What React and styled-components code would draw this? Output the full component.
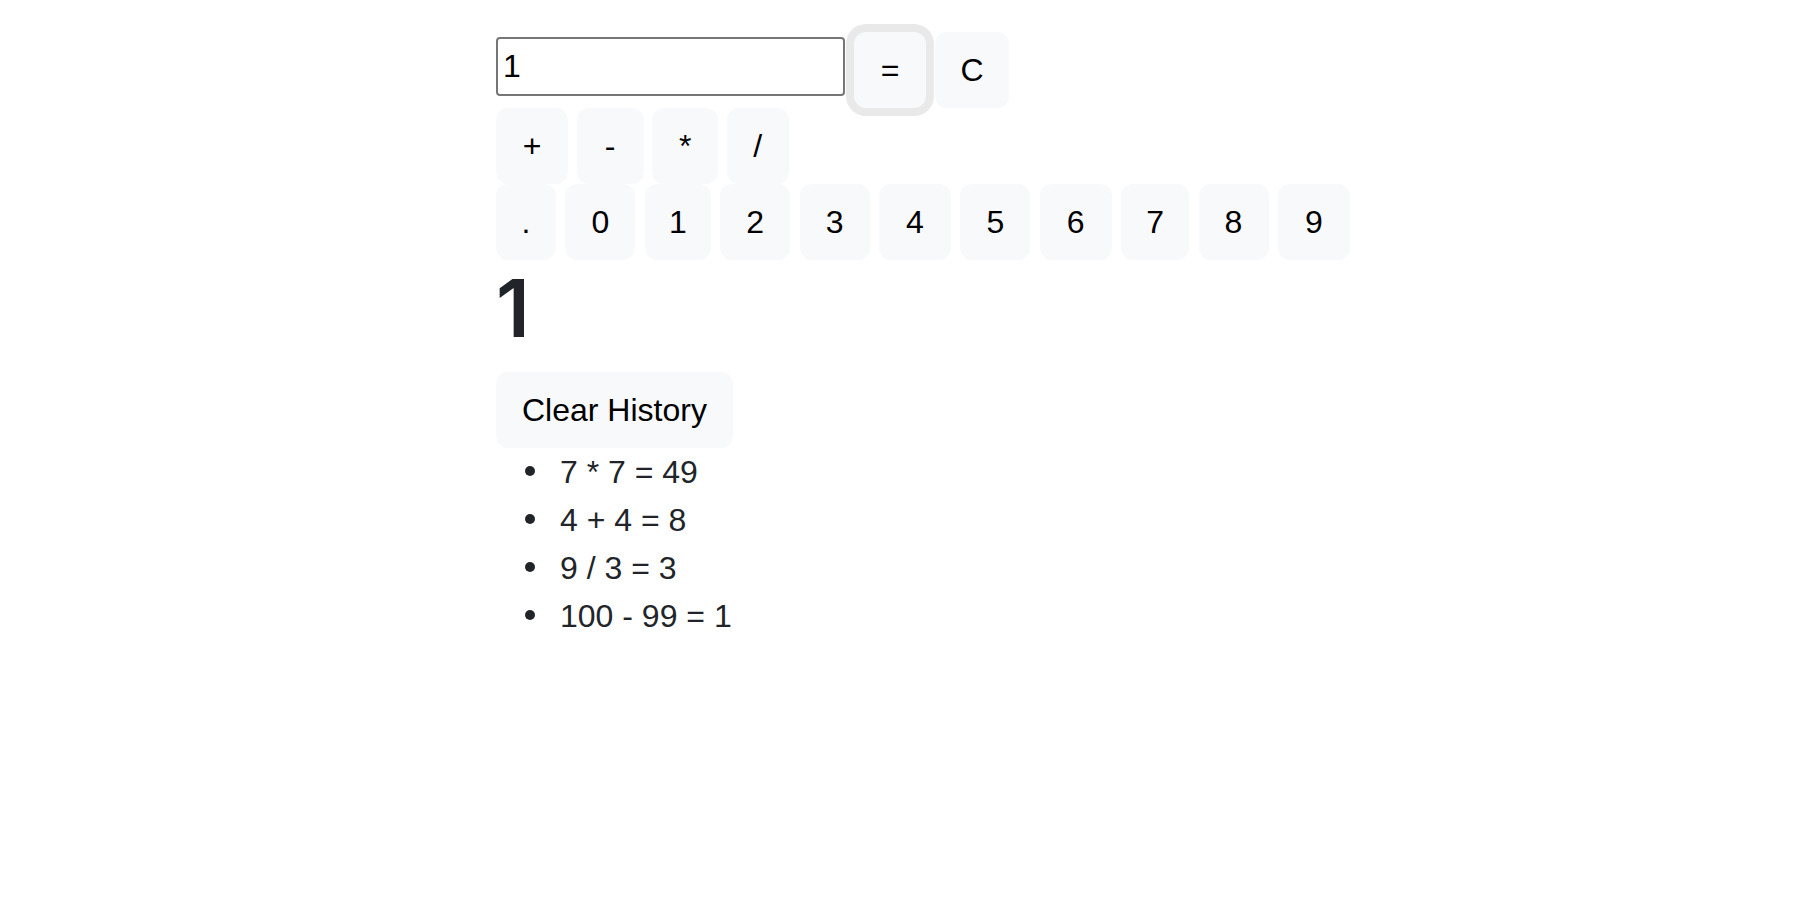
import React, { useState } from 'react';
import styled, { createGlobalStyle } from 'styled-components';

const GlobalStyle = createGlobalStyle`
    html, body {
        margin: 0;
        padding: 0;
        background: #fff;
    }
    body {
        font-family: 'Liberation Sans', Arial, sans-serif;
        color: #212529;
    }
`;

const Page = styled.div`
    padding: 32px 0 0 496px;
`;

const Row = styled.div`
    display: flex;
    align-items: flex-start;
    gap: ${props => props.gap || 9}px;
`;

const Display = styled.input`
    box-sizing: border-box;
    width: 349px;
    height: 59px;
    margin: 5px 0 0 0;
    padding: 2px 5px;
    border: 2px solid #767676;
    border-radius: 4px;
    font-family: 'Liberation Sans', Arial, sans-serif;
    font-size: 32px;
    color: #000;
    background: #fff;
    outline: none;
`;

const Key = styled.button`
    box-sizing: border-box;
    width: ${props => (props.w ? `${props.w}px` : 'auto')};
    height: 76px;
    padding: 12px ${props => (props.w ? 0 : 24)}px;
    border: 2px solid #f8f9fa;
    border-radius: 12px;
    background: #f8f9fa;
    font-family: 'Liberation Sans', Arial, sans-serif;
    font-size: 32px;
    line-height: 48px;
    color: #000;
    text-align: center;
    cursor: pointer;
    box-shadow: ${props => (props.focused ? '0 0 0 8px rgba(211, 212, 213, 0.5)' : 'none')};
`;

const Result = styled.h1`
    margin: 0 0 16px 0;
    font-family: Inter, 'Liberation Sans', sans-serif;
    font-size: 80px;
    font-weight: 600;
    line-height: 96px;
    color: #212529;
`;

const History = styled.ul`
    margin: 0 0 32px 0;
    padding-left: 64px;
    list-style: none;
    font-size: 32px;
    line-height: 48px;
    color: #212529;
`;

const HistoryItem = styled.li`
    &::before {
        content: '';
        display: inline-block;
        width: 10px;
        height: 10px;
        margin: 0 25px 0 -35px;
        border-radius: 50%;
        background: #212529;
        vertical-align: 7px;
    }
`;

const ops = [
    { label: '+', w: 72 },
    { label: '-', w: 67 },
    { label: '*', w: 66 },
    { label: '/', w: 62 },
];

const digits = [
    { label: '.', w: 60 },
    { label: '0', w: 70 },
    { label: '1', w: 66 },
    { label: '2', w: 70 },
    { label: '3', w: 70 },
    { label: '4', w: 72 },
    { label: '5', w: 70 },
    { label: '6', w: 72 },
    { label: '7', w: 68 },
    { label: '8', w: 70 },
    { label: '9', w: 72 },
];

const App = () => {
    const [value, setValue] = useState('1');
    const [history, setHistory] = useState([
        '7 * 7 = 49',
        '4 + 4 = 8',
        '9 / 3 = 3',
        '100 - 99 = 1',
    ]);

    return (
        <Page>
            <GlobalStyle />
            <Row gap={9}>
                <Display value={value} onChange={e => setValue(e.target.value)} />
                <Key w={72} focused>=</Key>
                <Key w={74} onClick={() => setValue('')}>C</Key>
            </Row>
            <Row gap={8.6}>
                {ops.map(op => (
                    <Key key={op.label} w={op.w} onClick={() => setValue(value + op.label)}>
                        {op.label}
                    </Key>
                ))}
            </Row>
            <Row gap={9.4}>
                {digits.map(d => (
                    <Key key={d.label} w={d.w} onClick={() => setValue(value + d.label)}>
                        {d.label}
                    </Key>
                ))}
            </Row>
            <Result>1</Result>
            <Key onClick={() => setHistory([])}>Clear History</Key>
            <History>
                {history.map(item => (
                    <HistoryItem key={item}>{item}</HistoryItem>
                ))}
            </History>
        </Page>
    );
};

export default App;
